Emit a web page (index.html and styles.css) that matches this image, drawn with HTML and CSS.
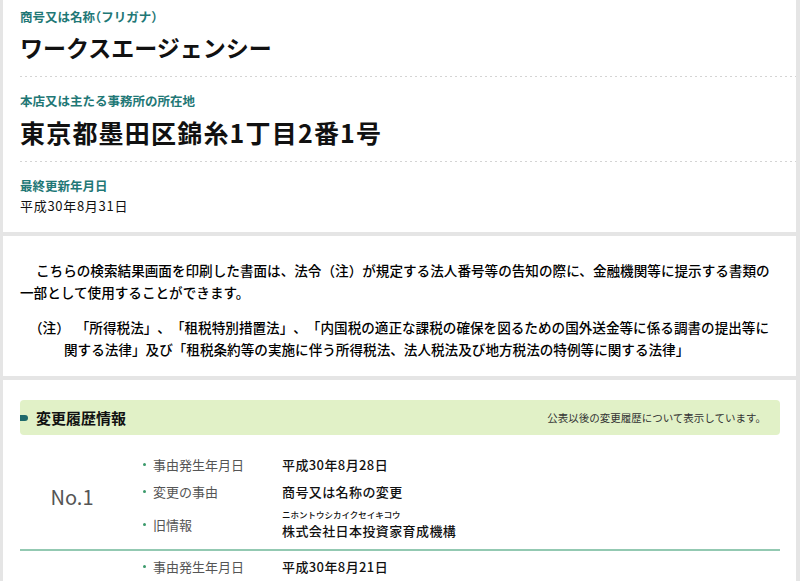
FILE: index.html
```html
<!DOCTYPE html>
<html lang="ja">
<head>
<meta charset="utf-8">
<title>法人番号 検索結果</title>
<link rel="stylesheet" href="styles.css">
</head>
<body>
<section class="panel basic">
  <div class="field first">
    <div class="f-label">商号又は名称<span class="half">（</span>フリガナ<span class="half">）</span></div>
    <div class="f-name">ワークスエージェンシー</div>
  </div>
  <div class="field">
    <div class="f-label">本店又は主たる事務所の所在地</div>
    <div class="f-addr">東京都墨田区錦糸1丁目2番1号</div>
  </div>
  <div class="field last">
    <div class="f-label">最終更新年月日</div>
    <div class="f-date">平成30年8月31日</div>
  </div>
</section>

<section class="panel notice">
  <p class="lead">こちらの検索結果画面を印刷した書面は、法令（注）が規定する法人番号等の告知の際に、金融機関等に提示する書類の一部として使用することができます。</p>
  <div class="note">
    <div class="note-first"><span class="note-mark">（注）</span><span>「所得税法」、「租税特別措置法」、「内国税の適正な課税の確保を図るための国外送金等に係る調書の提出等に</span></div>
    <div class="note-rest">関する法律」及び「租税条約等の実施に伴う所得税法、法人税法及び地方税法の特例等に関する法律」</div>
  </div>
</section>

<section class="panel history">
  <div class="h-head">
    <span class="marker"></span>
    <h2 class="h-title">変更履歴情報</h2>
    <span class="h-note">公表以後の変更履歴について表示しています。</span>
  </div>

  <div class="record">
    <div class="no">No.1</div>
    <ul class="items">
      <li class="item"><span class="dot"></span><span class="label">事由発生年月日</span><span class="value">平成30年8月28日</span></li>
      <li class="item"><span class="dot"></span><span class="label">変更の事由</span><span class="value">商号又は名称の変更</span></li>
      <li class="item old"><span class="dot"></span><span class="label">旧情報</span><span class="value"><span class="kana">ニホントウシカイクセイキコウ</span><span class="name">株式会社日本投資家育成機構</span></span></li>
    </ul>
  </div>

  <div class="record">
    <div class="no">No.2</div>
    <ul class="items">
      <li class="item"><span class="dot"></span><span class="label">事由発生年月日</span><span class="value">平成30年8月21日</span></li>
      <li class="item"><span class="dot"></span><span class="label">変更の事由</span><span class="value">国内所在地の変更</span></li>
      <li class="item old"><span class="dot"></span><span class="label">旧情報</span><span class="value"><span class="kana">&nbsp;</span><span class="name">東京都千代田区丸の内1丁目1番1号</span></span></li>
    </ul>
  </div>
</section>
</body>
</html>
```

FILE: styles.css
```css
* {
  box-sizing: border-box;
  margin: 0;
  padding: 0;
}

html,
body {
  background: #e5e5e5;
}

body {
  font-family: "Noto Sans CJK JP", "Noto Sans", sans-serif;
  color: #111;
  padding: 0 4px 0 3px;
  text-spacing-trim: space-all;
}

.panel {
  background: #fff;
}

.panel + .panel {
  margin-top: 4px;
}

/* basic info */
.basic {
  padding-left: 17px;
}

.field {
  padding: 15px 0 13px;
  background: linear-gradient(to right, #d4d4d4 2px, transparent 2px) left bottom / 5px 1px repeat-x;
}

.field.first {
  padding-top: 8px;
  padding-bottom: 14px;
}

.field.last {
  padding-bottom: 17px;
  background: none;
}

.f-label {
  font-size: 12.5px;
  line-height: 18px;
  font-weight: 700;
  color: #1f7876;
}

.half {
  font-feature-settings: "halt";
}

.f-name {
  margin-top: 5px;
  font-size: 23px;
  line-height: 32px;
  font-weight: 700;
}

.f-addr {
  margin-top: 5px;
  font-size: 25px;
  line-height: 34px;
  font-weight: 700;
  letter-spacing: 1.2px;
}

.f-date {
  margin-top: 2px;
  font-size: 13px;
  line-height: 18px;
  letter-spacing: 0.7px;
}

/* notice */
.notice {
  padding: 23px 16px 16px 17px;
  font-size: 13.6px;
  line-height: 22px;
  font-weight: 500;
  color: #000;
}

.lead {
  text-indent: 16px;
}

.note {
  margin-top: 13px;
}

.note-first {
  display: flex;
  padding-left: 9px;
  white-space: nowrap;
}

.note-mark {
  margin-right: 6px;
}

.note-rest {
  padding-left: 44px;
}

/* history */
.history {
  padding: 20px 16px 0 17px;
}

.h-head {
  display: flex;
  align-items: center;
  height: 35px;
  margin-bottom: 12px;
  padding-right: 14px;
  background: #e1f1c7;
  border-radius: 4px;
}

.marker {
  width: 8px;
  height: 6px;
  margin-right: 8px;
  background: #1f6a6b;
  border-radius: 0 3px 3px 0;
}

.h-title {
  font-size: 15px;
  font-weight: 700;
  line-height: 20px;
}

.h-note {
  margin-left: auto;
  font-size: 10.5px;
  color: #333;
}

.record {
  display: flex;
  align-items: center;
  padding: 4px 0 8px;
  border-bottom: 2px solid #93c9b2;
}

.record + .record {
  padding-top: 2px;
}

.no {
  width: 104px;
  text-align: center;
  font-size: 20px;
  color: #555;
}

.items {
  list-style: none;
  margin-left: 19px;
}

.item {
  display: flex;
  align-items: center;
  min-height: 27px;
  font-size: 13px;
  line-height: 27px;
}

.item.old {
  padding-top: 3px;
}

.dot {
  width: 3px;
  height: 3px;
  margin-right: 7px;
  border-radius: 50%;
  background: #3b9a6b;
}

.label {
  width: 129px;
  color: #555;
}

.value {
  display: flex;
  flex-direction: column;
  font-weight: 500;
  color: #111;
  letter-spacing: 0.4px;
}

.kana {
  font-size: 8.5px;
  line-height: 13px;
  letter-spacing: 0;
}

.name {
  line-height: 20px;
}
```
